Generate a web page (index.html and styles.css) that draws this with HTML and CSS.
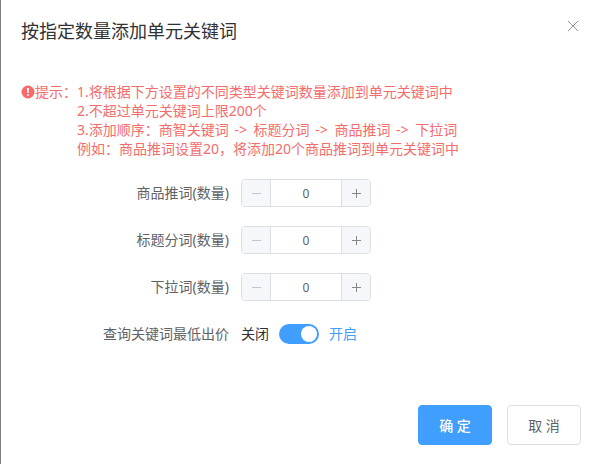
FILE: index.html
```html
<!DOCTYPE html>
<html lang="zh-CN">
<head>
    <meta charset="UTF-8">
    <meta name="viewport" content="width=device-width, initial-scale=1.0">
    <title>按指定数量添加单元关键词</title>
    <link rel="stylesheet" href="styles.css">
</head>
<body>
    <div class="dialog" role="dialog" aria-labelledby="dialog-title">
        <div class="dialog-header">
            <h1 class="dialog-title" id="dialog-title">按指定数量添加单元关键词</h1>
            <button type="button" class="dialog-close" aria-label="关闭">
                <svg width="16" height="16" viewBox="0 0 16 16"><path d="M3 3l10 10M13 3L3 13"/></svg>
            </button>
        </div>
        <form class="dialog-form">
            <div class="tips">
                <div class="tips-label">
                    <svg class="tips-icon" width="14" height="14" viewBox="0 0 14 14">
                        <circle cx="7" cy="7" r="6.5"/>
                        <path d="M6 3h2l-.3 4.9H6.3z"/>
                        <circle class="dot" cx="7" cy="10" r=".9"/>
                    </svg>
                    <span>提示：</span>
                </div>
                <div class="tips-text">
                    <div>1.将根据下方设置的不同类型关键词数量添加到单元关键词中</div>
                    <div>2.不超过单元关键词上限200个</div>
                    <div>3.添加顺序：商智关键词 <span class="arrow">-&gt;</span> 标题分词 <span class="arrow">-&gt;</span> 商品推词 <span class="arrow">-&gt;</span> 下拉词</div>
                    <div>例如：商品推词设置20，将添加20个商品推词到单元关键词中</div>
                </div>
            </div>
            <div class="form-item">
                <label class="form-label" for="goods">商品推词(数量)</label>
                <div class="input-number">
                    <button type="button" class="step" aria-label="减少" disabled><svg width="13" height="13" viewBox="0 0 13 13"><path d="M2 6.5h9"/></svg></button>
                    <input type="number" id="goods" min="0" value="0">
                    <button type="button" class="step" aria-label="增加"><svg width="13" height="13" viewBox="0 0 13 13"><path d="M2 6.5h9M6.5 2v9"/></svg></button>
                </div>
            </div>
            <div class="form-item">
                <label class="form-label" for="words">标题分词(数量)</label>
                <div class="input-number">
                    <button type="button" class="step" aria-label="减少" disabled><svg width="13" height="13" viewBox="0 0 13 13"><path d="M2 6.5h9"/></svg></button>
                    <input type="number" id="words" min="0" value="0">
                    <button type="button" class="step" aria-label="增加"><svg width="13" height="13" viewBox="0 0 13 13"><path d="M2 6.5h9M6.5 2v9"/></svg></button>
                </div>
            </div>
            <div class="form-item">
                <label class="form-label" for="dropdown">下拉词(数量)</label>
                <div class="input-number">
                    <button type="button" class="step" aria-label="减少" disabled><svg width="13" height="13" viewBox="0 0 13 13"><path d="M2 6.5h9"/></svg></button>
                    <input type="number" id="dropdown" min="0" value="0">
                    <button type="button" class="step" aria-label="增加"><svg width="13" height="13" viewBox="0 0 13 13"><path d="M2 6.5h9M6.5 2v9"/></svg></button>
                </div>
            </div>
            <div class="form-item">
                <label class="form-label" for="lowest">查询关键词最低出价</label>
                <div class="switch">
                    <span>关闭</span>
                    <input type="checkbox" role="switch" id="lowest" checked>
                    <span class="switch-on">开启</span>
                </div>
            </div>
            <div class="dialog-footer">
                <button type="submit" class="btn btn-primary">确 定</button>
                <button type="button" class="btn">取 消</button>
            </div>
        </form>
    </div>
</body>
</html>
```

FILE: styles.css
```css
* {
    box-sizing: border-box;
}
body {
    margin: 0;
    background-color: #7f7f7f;
    font-family: "Noto Sans", "Noto Sans CJK SC", sans-serif;
    font-size: 14px;
    color: #606266;
}
button, input {
    margin: 0;
    padding: 0;
    font-family: inherit;
    color: inherit;
}
button {
    cursor: pointer;
}
svg {
    display: block;
    fill: none;
    stroke: currentColor;
}
.dialog {
    min-height: 100vh;
    margin-left: 1px;
    padding: 18px 20px;
    background-color: #fff;
}
.dialog-header {
    display: flex;
    justify-content: space-between;
    align-items: flex-start;
}
.dialog-title {
    margin: 0;
    font-size: 18px;
    font-weight: 400;
    line-height: 26px;
    color: #303133;
}
.dialog-close {
    border: 0;
    background: none;
    color: #909399;
}
.dialog-form {
    margin-top: 38px;
}
.tips {
    display: flex;
    margin-bottom: 21px;
    line-height: 19px;
    color: #f56c6c;
}
.tips-label {
    display: flex;
    flex: none;
    align-items: center;
    height: 19px;
}
.tips-icon {
    fill: #f56c6c;
    stroke: none;
}
.tips-icon path,
.tips-icon .dot {
    fill: #fff;
}
.arrow {
    margin: 0 3px 0 2px;
}
.form-item {
    display: flex;
    align-items: center;
    margin-bottom: 19px;
    line-height: 28px;
}
.form-label {
    width: 220px;
    padding-right: 12px;
    text-align: right;
}
.input-number {
    display: flex;
    width: 130px;
    height: 28px;
    border: 1px solid #dcdfe6;
    border-radius: 4px;
    overflow: hidden;
}
.input-number input {
    flex: 1;
    min-width: 0;
    border: 0;
    border-left: 1px solid #dcdfe6;
    border-right: 1px solid #dcdfe6;
    font-size: 12px;
    text-align: center;
    appearance: textfield;
}
.input-number input::-webkit-inner-spin-button {
    display: none;
}
.step {
    display: flex;
    justify-content: center;
    align-items: center;
    width: 28px;
    border: 0;
    background-color: #f5f7fa;
}
.step svg {
    color: #85878c;
}
.step:disabled svg {
    color: #c0c4cc;
}
.step:disabled {
    cursor: not-allowed;
}
.switch {
    display: flex;
    align-items: center;
    gap: 10px;
    color: #303133;
}
.switch input {
    display: flex;
    justify-content: flex-end;
    width: 40px;
    height: 20px;
    padding: 2px;
    border-radius: 10px;
    background-color: #409eff;
    appearance: none;
}
.switch input::before {
    content: "";
    width: 16px;
    height: 16px;
    border-radius: 50%;
    background-color: #fff;
}
.switch input:not(:checked) {
    justify-content: flex-start;
    background-color: #dcdfe6;
}
.switch-on {
    color: #409eff;
}
.dialog-footer {
    display: flex;
    justify-content: flex-end;
    gap: 15px;
    margin-top: 57px;
}
.btn {
    width: 74px;
    height: 40px;
    border: 1px solid #dcdfe6;
    border-radius: 4px;
    background-color: #fff;
    font-size: 14px;
    font-weight: 400;
}
.btn-primary {
    border-color: #409eff;
    background-color: #409eff;
    color: #fff;
    font-weight: 500;
}
```
